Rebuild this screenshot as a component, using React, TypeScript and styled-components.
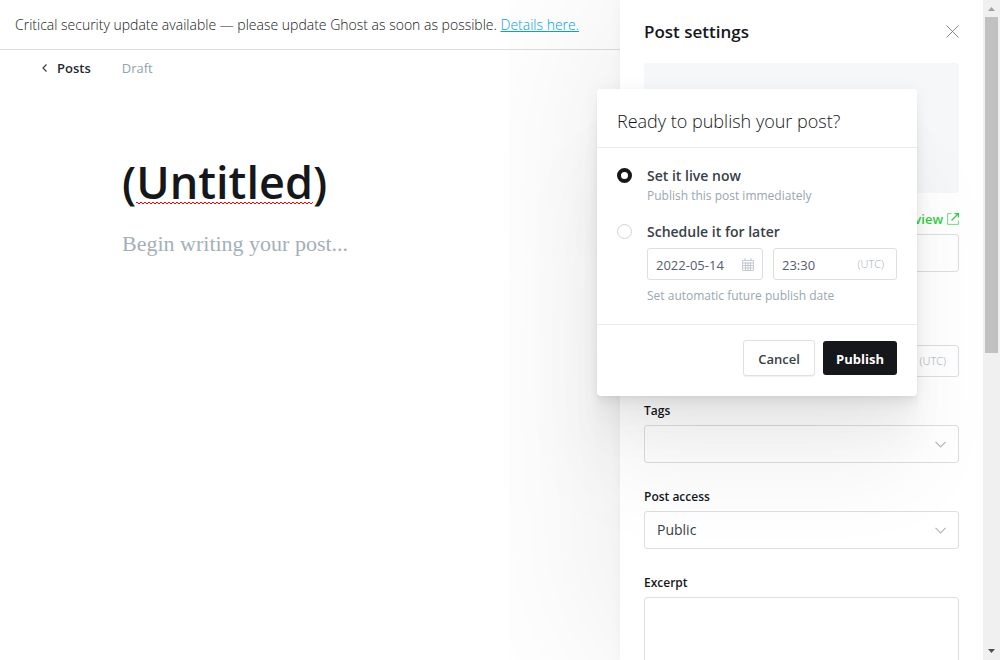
import React from 'react';
import styled, { createGlobalStyle } from 'styled-components';

const GlobalStyle = createGlobalStyle`
  *, *::before, *::after { box-sizing: border-box; }
  body {
    margin: 0;
    background: #fff;
    color: #394047;
    font-family: 'Open Sans', 'Noto Sans', sans-serif;
    font-size: 13px;
    line-height: 16px;
    overflow: hidden;
  }
  input, select, textarea, button { font: inherit; color: inherit; }
  h1, h2, p { margin: 0; }
`;

const Page = styled.div`
  position: relative;
  display: flex;
  height: 100vh;
  overflow: hidden;
`;

const Main = styled.main`
  flex: 1;
  min-width: 0;
`;

const Banner = styled.div`
  padding: 15px 15px 14px;
  border-bottom: 1px solid #dddedf;
  color: #15171a;
  font-size: 14px;
  font-weight: 300;
  line-height: 20px;
  white-space: nowrap;
`;

const BannerLink = styled.a`
  color: #00a4eb;
  text-decoration: underline;
`;

const EditorBar = styled.header`
  display: flex;
  align-items: center;
  gap: 31px;
  padding: 8px 41px;
  line-height: 20px;
`;

const BackLink = styled.a`
  display: flex;
  align-items: center;
  gap: 9px;
  color: #26292d;
  font-weight: 600;
  text-decoration: none;
`;

const Status = styled.span`
  color: #8fa3ad;
`;

const Editor = styled.section`
  padding: 66px 122px 0;
`;

const PostTitle = styled.h1`
  color: #15171a;
  font-size: 45px;
  font-weight: 600;
  line-height: 60px;
  outline: none;
`;

const Misspelt = styled.span`
  background:
    linear-gradient(90deg, #f00 2px, transparent 2px) 0 51px / 4px 1px repeat-x,
    linear-gradient(90deg, transparent 2px, #f00 2px) 0 52px / 4px 1px repeat-x;
`;

const PostBody = styled.textarea`
  display: block;
  width: 100%;
  height: 160px;
  margin-top: 16px;
  padding: 0;
  border: 0;
  outline: none;
  resize: none;
  background: transparent;
  font-family: 'Liberation Serif', serif;
  font-size: 22px;
  line-height: 32px;
  &::placeholder { color: #a5afba; opacity: 1; }
`;

const Settings = styled.aside`
  width: 363px;
  padding: 20px 24px 0;
  background: #fff;
  box-shadow: 0 0 12px rgba(0, 0, 0, 0.04), 0 0 200px rgba(0, 0, 0, 0.1);
  overflow: hidden;
`;

const SettingsHeader = styled.header`
  display: flex;
  align-items: center;
  justify-content: space-between;
  margin-bottom: 19px;
`;

const SettingsTitle = styled.h2`
  color: #15171a;
  font-size: 17px;
  font-weight: 600;
  line-height: 24px;
`;

const IconButton = styled.button`
  display: flex;
  padding: 0 0 2px;
  border: 0;
  background: none;
`;

const ImageDrop = styled.div`
  height: 130px;
  margin-bottom: 18px;
  border-radius: 3px;
  background: #f5f7f9;
`;

const Field = styled.div<{ $gap?: number }>`
  margin-bottom: ${(p) => p.$gap ?? 26}px;
`;

const LabelRow = styled.div<{ $gap?: number }>`
  display: flex;
  margin-bottom: ${(p) => p.$gap ?? 6}px;
  color: #15171a;
  font-size: 12px;
  font-weight: 600;
  line-height: 16px;
`;

const PreviewLink = styled.a`
  display: flex;
  align-items: center;
  gap: 4px;
  margin-left: auto;
  color: #30cf43;
  font-size: 13px;
  text-decoration: none;
`;

const Control = styled.div<{ $small?: boolean; $width?: number }>`
  display: flex;
  align-items: center;
  flex: ${(p) => (p.$width ? `0 0 ${p.$width}px` : '1')};
  min-width: 0;
  height: ${(p) => (p.$small ? 32 : 38)}px;
  padding: 0 ${(p) => (p.$small ? 8 : 12)}px;
  border: 1px solid #dddedf;
  border-radius: 3px;
`;

const TextInput = styled.input`
  flex: 1;
  width: 100%;
  min-width: 0;
  padding: 2px 0 0;
  border: 0;
  outline: none;
  background: transparent;
  color: #54606b;
`;

const Select = styled.select`
  flex: 1;
  min-width: 0;
  padding: 0;
  border: 0;
  outline: none;
  appearance: none;
  background: transparent;
  font-size: 14px;
  line-height: 20px;
`;

const Excerpt = styled.textarea`
  display: block;
  width: 100%;
  height: 108px;
  border: 1px solid #dddedf;
  border-radius: 3px;
  outline: none;
  resize: none;
  background: transparent;
`;

const Zone = styled.span`
  padding: 0 4px;
  color: #a3adb8;
  font-size: 11px;
  font-weight: 300;
`;

const ControlRow = styled.div`
  display: flex;
  gap: 10px;
`;

const Scrollbar = styled.div`
  display: flex;
  flex-direction: column;
  align-items: center;
  width: 17px;
  background: #f0f0f0;
`;

const ScrollThumb = styled.div`
  flex: 0 1 336px;
  width: 13px;
  background: #c1c1c1;
`;

const ScrollArrow = styled.svg`
  display: block;
  flex: none;
`;

const ScrollRest = styled.div`
  flex: 1;
`;

const Dialog = styled.form`
  position: absolute;
  top: 89px;
  right: 83px;
  width: 320px;
  border-radius: 4px;
  background: #fff;
  box-shadow:
    0 3px 2px rgba(0, 0, 0, 0.02),
    0 7px 5px rgba(0, 0, 0, 0.02),
    0 12px 10px rgba(0, 0, 0, 0.02),
    0 0 16px rgba(0, 0, 0, 0.05),
    0 22px 18px rgba(0, 0, 0, 0.02),
    0 42px 34px rgba(0, 0, 0, 0.03),
    0 80px 90px rgba(0, 0, 0, 0.05);
`;

const DialogHeader = styled.header`
  padding: 20px 20px 14px;
  border-bottom: 1px solid #e9ebed;
`;

const DialogTitle = styled.h2`
  color: #15171a;
  font-size: 18px;
  font-weight: 300;
  line-height: 24px;
`;

const DialogBody = styled.div`
  display: flex;
  flex-direction: column;
  gap: 16px;
  padding: 18px 20px 18px;
`;

const Option = styled.div`
  display: flex;
  gap: 15px;
`;

const Radio = styled.input`
  flex: none;
  width: 15px;
  height: 15px;
  margin: 2px 0 0;
  appearance: none;
  border: 1px solid #ced4d9;
  border-radius: 50%;
  background: #fff;
  &:checked { border: 4px solid #15171a; }
`;

const OptionText = styled.div`
  flex: 1;
  min-width: 0;
  line-height: 20px;
`;

const OptionLabel = styled.label`
  display: block;
  color: #394047;
  font-size: 14px;
  font-weight: 600;
`;

const Hint = styled.p`
  color: #9aa6b2;
  font-size: 12px;
`;

const Schedule = styled(ControlRow)`
  margin: 6px 0;
`;

const DialogFooter = styled.footer`
  display: flex;
  align-items: center;
  justify-content: flex-end;
  gap: 8px;
  padding: 15px 20px 20px;
  border-top: 1px solid #e9ebed;
`;

const Button = styled.button<{ $primary?: boolean }>`
  height: ${(p) => (p.$primary ? 34 : 36)}px;
  width: ${(p) => (p.$primary ? 74 : 72)}px;
  padding: 2px 0 0;
  border: ${(p) => (p.$primary ? '0' : '1px solid #dde1e5')};
  border-radius: 3px;
  background: ${(p) => (p.$primary ? '#15171a' : '#fff')};
  color: ${(p) => (p.$primary ? '#fff' : '#394047')};
  font-weight: ${(p) => (p.$primary ? 700 : 600)};
  box-shadow: ${(p) => (p.$primary ? 'none' : '0 1px 1px rgba(0, 0, 0, 0.06)')};
`;

const Chevron = () => (
  <svg width="11" height="7" viewBox="0 0 11 7" fill="none" stroke="#aeb7c1" aria-hidden="true">
    <path d="M.5.8 5.500 5.800 10.500.8" strokeWidth="1.200" />
  </svg>
);

const Calendar = () => (
  <svg width="12" height="13" viewBox="0 0 12 13" fill="none" stroke="#aeb7c1" aria-hidden="true">
    <path d="M.5 2.500h11v10H.5zM.5 5h11M.5 7.500h11M.5 10h11M3.500 4v8.500M6 4v8.500M8.500 4v8.500M3 0v3M9 0v3" strokeWidth=".7" />
  </svg>
);

export default function App() {
  return (
    <Page>
      <GlobalStyle />
      <Main>
        <Banner>
          Critical security update available — please update Ghost as soon as possible.{' '}
          <BannerLink href="#details">Details here.</BannerLink>
        </Banner>
        <EditorBar>
          <BackLink href="#posts">
            <svg width="7" height="8" viewBox="0 0 7 8" fill="none" stroke="#394047" strokeWidth="1.2" aria-hidden="true">
              <path d="M5.500.5 2 4l3.500 3.500" />
            </svg>
            Posts
          </BackLink>
          <Status>Draft</Status>
        </EditorBar>
        <Editor>
          <PostTitle contentEditable suppressContentEditableWarning spellCheck={false} role="textbox" aria-label="Post title">
            (<Misspelt>Untitled</Misspelt>)
          </PostTitle>
          <PostBody aria-label="Post body" placeholder="Begin writing your post..." />
        </Editor>
      </Main>
      <Settings>
        <SettingsHeader>
          <SettingsTitle>Post settings</SettingsTitle>
          <IconButton type="button" aria-label="Close">
            <svg width="13" height="13" viewBox="0 0 13 13" fill="none" stroke="#626d79" strokeWidth=".8">
              <path d="M.5.5l12 12M12.500.5l-12 12" />
            </svg>
          </IconButton>
        </SettingsHeader>
        <ImageDrop />
        <Field $gap={51}>
          <LabelRow $gap={7}>
            <PreviewLink href="#preview">
              Preview
              <svg width="12" height="12" viewBox="0 0 12 12" fill="none" stroke="currentColor" aria-hidden="true">
                <path d="M4.500.6H.6v3.900M.6 4.500v6.900h3.900M4.500 11.400h6.900V7.500" strokeOpacity=".7" />
                <path d="M4.500 7.500 11 1M7.500.6h3.900v3.900" strokeWidth="1.200" />
              </svg>
            </PreviewLink>
          </LabelRow>
          <Control><TextInput aria-label="Post URL" /></Control>
        </Field>
        <Field>
          <LabelRow><label htmlFor="date">Publish date</label></LabelRow>
          <ControlRow>
            <Control $small><TextInput id="date" /></Control>
            <Control $small><TextInput aria-label="Publish time" /><Zone>(UTC)</Zone></Control>
          </ControlRow>
        </Field>
        <Field>
          <LabelRow><label htmlFor="tags">Tags</label></LabelRow>
          <Control><Select id="tags"><option /></Select><Chevron /></Control>
        </Field>
        <Field>
          <LabelRow><label htmlFor="access">Post access</label></LabelRow>
          <Control><Select id="access"><option>Public</option></Select><Chevron /></Control>
        </Field>
        <Field>
          <LabelRow><label htmlFor="excerpt">Excerpt</label></LabelRow>
          <Excerpt id="excerpt" />
        </Field>
      </Settings>
      <Scrollbar aria-hidden="true">
        <ScrollArrow width="17" height="17" viewBox="0 0 17 17"><path d="M5 11l3.500-4 3.500 4z" fill="#a3a3a3" /></ScrollArrow>
        <ScrollThumb />
        <ScrollRest />
        <ScrollArrow width="17" height="17" viewBox="0 0 17 17"><path d="M5 6l3.500 4L12 6z" fill="#505050" /></ScrollArrow>
      </Scrollbar>
      <Dialog role="dialog" aria-labelledby="publish-title">
        <DialogHeader><DialogTitle id="publish-title">Ready to publish your post?</DialogTitle></DialogHeader>
        <DialogBody>
          <Option>
            <Radio type="radio" name="when" id="now" defaultChecked />
            <OptionText>
              <OptionLabel htmlFor="now">Set it live now</OptionLabel>
              <Hint>Publish this post immediately</Hint>
            </OptionText>
          </Option>
          <Option>
            <Radio type="radio" name="when" id="later" />
            <OptionText>
              <OptionLabel htmlFor="later">Schedule it for later</OptionLabel>
              <Schedule>
                <Control $small $width={116}>
                  <TextInput aria-label="Schedule date" defaultValue="2022-05-14" />
                  <Calendar />
                </Control>
                <Control $small>
                  <TextInput aria-label="Schedule time" defaultValue="23:30" />
                  <Zone>(UTC)</Zone>
                </Control>
              </Schedule>
              <Hint>Set automatic future publish date</Hint>
            </OptionText>
          </Option>
        </DialogBody>
        <DialogFooter>
          <Button type="button">Cancel</Button>
          <Button type="submit" $primary>Publish</Button>
        </DialogFooter>
      </Dialog>
    </Page>
  );
}
